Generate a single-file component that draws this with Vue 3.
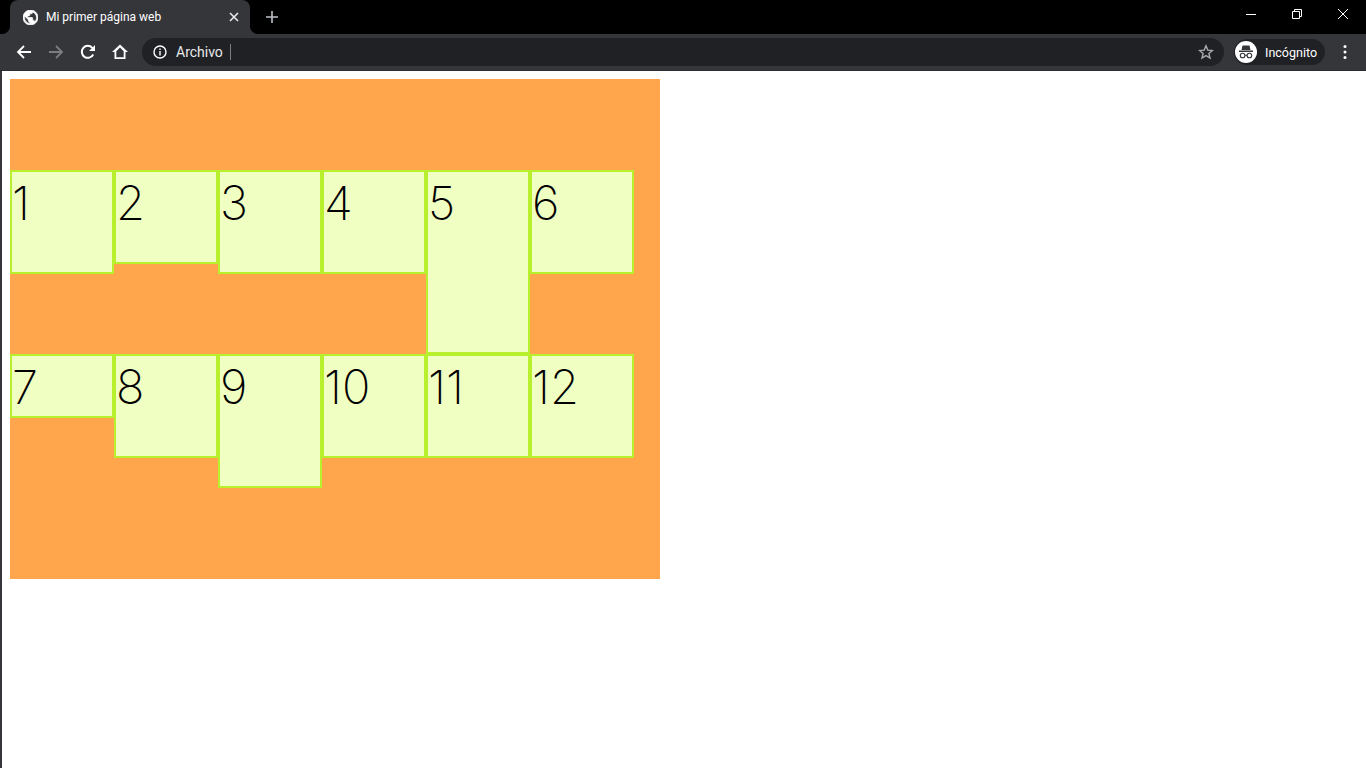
<template>
  <div class="window">
    <div class="titlebar">
      <div class="tab">
        <svg class="favicon" viewBox="2 2 20 20">
          <path d="M12 2C6.48 2 2 6.48 2 12s4.480 10 10 10 10-4.480 10-10S17.520 2 12 2zm-1 17.930c-3.950-.490-7-3.850-7-7.930 0-.620.080-1.210.210-1.790L9 15v1c0 1.100.900 2 2 2v1.930zm6.900-2.540c-.260-.810-1-1.390-1.900-1.390h-1v-3c0-.550-.450-1-1-1H8v-2h2c.550 0 1-.450 1-1V7h2c1.100 0 2-.900 2-2v-.410c2.930 1.190 5 4.060 5 7.410 0 2.080-.800 3.970-2.100 5.390z" fill="#fff" stroke="#fff" stroke-width=".9" />
        </svg>
        <span class="tab-title">Mi primer página web</span>
        <svg class="tab-close" viewBox="0 0 10 10">
          <path d="M1 1l8 8M9 1l-8 8" stroke="#e8eaed" stroke-width="1.6" fill="none" />
        </svg>
      </div>
      <svg class="new-tab" viewBox="0 0 12 12">
        <path d="M6 0v12M0 6h12" stroke="#bdc1c6" stroke-width="1.6" fill="none" />
      </svg>
      <div class="win-controls">
        <svg viewBox="0 0 10 10" class="win-icon"><path d="M0 5.500h10" stroke="#fff" fill="none" /></svg>
        <svg viewBox="0 0 10 10" class="win-icon"><path d="M.5 2.500h7v7h-7zM2.500 2.500v-2h7v7h-2" stroke="#fff" fill="none" /></svg>
        <svg viewBox="0 0 10 10" class="win-icon"><path d="M0 0l10 10M10 0L0 10" stroke="#fff" fill="none" /></svg>
      </div>
    </div>
    <div class="toolbar">
      <svg class="tool" viewBox="0 0 16 16"><path d="M15 8H2M8 2 2 8l6 6" stroke="#fff" stroke-width="1.800" fill="none" /></svg>
      <svg class="tool" viewBox="0 0 16 16"><path d="M1 8h13M8 2l6 6-6 6" stroke="#7c7d80" stroke-width="1.800" fill="none" /></svg>
      <svg class="tool" viewBox="0 0 16 16"><path d="M13.200 10.500A6 6 0 1 1 12.300 3.800L14 5.500" stroke="#fff" stroke-width="2" fill="none" /><path d="M15 1v6H9z" fill="#fff" /></svg>
      <svg class="tool" viewBox="0 0 16 16"><path d="M8 .5 0 8h2.500v7h11V8H16zM4.300 13.200V7.200L8 3.600l3.700 3.600v6z" fill="#fff" fill-rule="evenodd" /></svg>
      <div class="omnibox">
        <svg class="info" viewBox="0 0 14 14">
          <circle cx="7" cy="7" r="6" stroke="#fff" stroke-width="1.400" fill="none" />
          <path d="M7 6v4.500M7 3.500v1.500" stroke="#fff" stroke-width="1.400" fill="none" />
        </svg>
        <span class="scheme">Archivo</span>
        <span class="divider"></span>
        <svg class="star" viewBox="0 0 16 16">
          <path d="m8 1.800 1.800 4.300 4.600.4-3.500 3 1.100 4.500L8 11.600 4 14l1.100-4.500-3.500-3 4.600-.4z" stroke="#a9abae" stroke-width="1.400" fill="none" />
        </svg>
      </div>
      <div class="profile">
        <span class="avatar">
          <svg viewBox="0 0 16 16" class="spy">
            <path d="M4.500 1.500h7l1 4.500h-9zM1 6.500h14V8H1z" fill="#35363a" />
            <circle cx="4.600" cy="11.500" r="2.300" stroke="#35363a" stroke-width="1.100" fill="none" />
            <circle cx="11.400" cy="11.500" r="2.300" stroke="#35363a" stroke-width="1.100" fill="none" />
            <path d="M7 11.200h2" stroke="#35363a" stroke-width="1.100" />
          </svg>
        </span>
        <span class="profile-name">Incógnito</span>
      </div>
      <svg class="menu" viewBox="0 0 4 16">
        <circle cx="2" cy="2.500" r="1.500" fill="#fff" />
        <circle cx="2" cy="8" r="1.500" fill="#fff" />
        <circle cx="2" cy="13.500" r="1.500" fill="#fff" />
      </svg>
    </div>
    <div class="page">
      <div class="container">
        <div v-for="box in boxes" :key="box.n" class="box" :style="{ height: box.h + 'px' }">{{ box.n }}</div>
      </div>
    </div>
  </div>
</template>

<script setup>
const boxes = [
  { n: 1, h: 100 },
  { n: 2, h: 90 },
  { n: 3, h: 100 },
  { n: 4, h: 100 },
  { n: 5, h: 180 },
  { n: 6, h: 100 },
  { n: 7, h: 60 },
  { n: 8, h: 100 },
  { n: 9, h: 130 },
  { n: 10, h: 100 },
  { n: 11, h: 100 },
  { n: 12, h: 100 }
]
</script>

<style>
html, body {
  margin: 0;
  height: 100%;
  overflow: hidden;
  background: #fff;
}
</style>

<style scoped>
.window {
  width: 1366px;
  height: 768px;
  display: flex;
  flex-direction: column;
  font-family: Roboto, "Liberation Sans", sans-serif;
  box-sizing: border-box;
  border-left: 2px solid #35363a;
}

.titlebar {
  height: 34px;
  background: #000;
  display: flex;
  align-items: flex-end;
  flex-shrink: 0;
  margin-left: -2px;
}

.tab {
  position: relative;
  width: 240px;
  height: 34px;
  margin-left: 10px;
  background: #35363a;
  border-radius: 8px 8px 0 0;
  display: flex;
  align-items: center;
  box-sizing: border-box;
  padding: 0 11px 0 13px;
}

/* inverted corners at the foot of the tab */
.tab::before,
.tab::after {
  content: "";
  position: absolute;
  bottom: 0;
  width: 8px;
  height: 8px;
}

.tab::before {
  left: -8px;
  background: radial-gradient(circle at 0 0, #000 7.5px, #35363a 8.5px);
}

.tab::after {
  right: -8px;
  background: radial-gradient(circle at 100% 0, #000 7.5px, #35363a 8.5px);
}

.favicon {
  width: 15px;
  height: 15px;
  flex-shrink: 0;
}

.tab-title {
  margin-left: 8px;
  font-size: 12px;
  color: #fff;
  flex: 1;
  white-space: nowrap;
}

.tab-close {
  width: 10px;
  height: 10px;
}

.new-tab {
  width: 12px;
  height: 12px;
  margin: 0 0 11px 16px;
}

.win-controls {
  margin-left: auto;
  align-self: flex-start;
  display: flex;
}

.win-icon {
  width: 10px;
  height: 10px;
  padding: 9px 18px;
}

.toolbar {
  height: 37px;
  background: #35363a;
  border-bottom: 1px solid #2b2c2f;
  display: flex;
  align-items: center;
  flex-shrink: 0;
  box-sizing: border-box;
  padding-left: 16px;
  margin-left: -2px;
}

.tool {
  width: 16px;
  height: 16px;
  margin-right: 16px;
  flex-shrink: 0;
}

.omnibox {
  width: 1082px;
  height: 28px;
  margin-left: -2px;
  background: #202124;
  border-radius: 14px;
  display: flex;
  align-items: center;
  padding: 0 10px 0 11px;
  box-sizing: border-box;
}

.info {
  width: 14px;
  height: 14px;
  flex-shrink: 0;
}

.scheme {
  margin-left: 9px;
  font-size: 14px;
  color: #e8eaed;
}

.divider {
  width: 1px;
  height: 16px;
  margin-left: 7px;
  background: #7c7d80;
}

.star {
  width: 16px;
  height: 16px;
  margin-left: auto;
}

.profile {
  width: 91px;
  height: 26px;
  margin-left: 10px;
  background: #202124;
  border-radius: 13px;
  display: flex;
  align-items: center;
  flex-shrink: 0;
}

.avatar {
  width: 22px;
  height: 22px;
  margin-left: 1px;
  background: #fff;
  border-radius: 50%;
  display: flex;
  align-items: center;
  justify-content: center;
}

.spy {
  width: 16px;
  height: 16px;
}

.profile-name {
  margin-left: 8px;
  font-size: 12.5px;
  color: #fff;
}

.menu {
  width: 4px;
  height: 16px;
  margin-left: 18px;
}

.page {
  flex: 1;
  background: #fff;
  padding: 8px;
}

.container {
  width: 650px;
  height: 500px;
  background: #ffa64d;
  display: flex;
  flex-wrap: wrap;
  align-items: flex-start;
  align-content: center;
}

.box {
  width: 100px;
  flex-shrink: 0;
  background: #f0ffc2;
  border: 2px solid #b8f02e;
  font-family: Inter, sans-serif;
  font-weight: 200;
  font-size: 47px;
  line-height: 62px;
  color: #000;
}
</style>
